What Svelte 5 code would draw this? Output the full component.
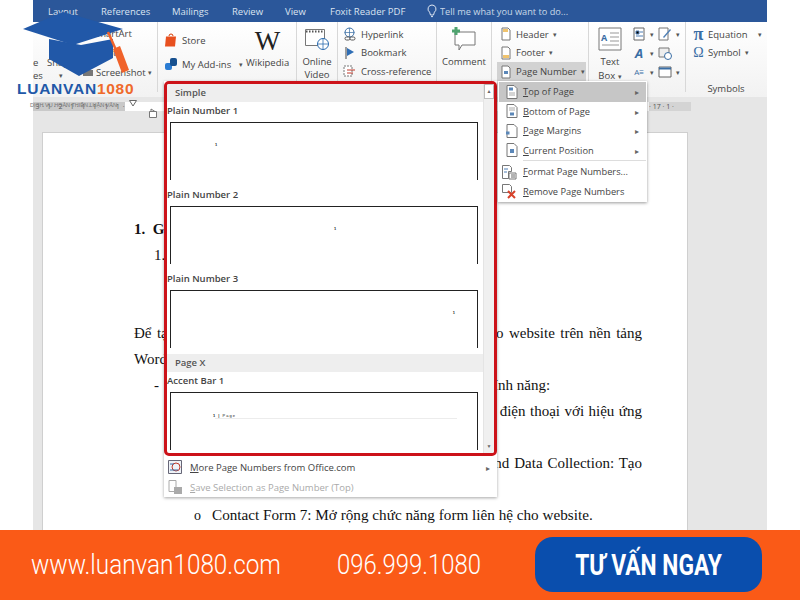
<script lang="ts">
	const tabs = [
		{label: 'Layout', width: 53},
		{label: 'References', width: 71},
		{label: 'Mailings', width: 60},
		{label: 'Review', width: 53},
		{label: 'View', width: 45},
		{label: 'Foxit Reader PDF', width: 96}
	];

	const docLines = [
		{text: 'Để tạo ra các chức năng cần thiết và thật hữu ích nhất cho website trên nền tảng', cls: 'just'},
		{text: 'WordPress, bạn có thể cài đặt thêm plugin:', cls: ''},
		{text: 'Elementor Page Builder: Trình dựng trang với nhiều tính năng:', cls: 'dash'},
		{text: 'Tạo giao diện đẹp, thân thiện trên máy tính và điện thoại với hiệu ứng', cls: 'just sub'},
		{text: '', cls: 'sub'},
		{text: 'WPForms Lite: Contact Form, Survey, Quiz and Data Collection: Tạo', cls: 'just sub'},
		{text: '', cls: 'sub'}
	];

	const gallery = [
		{head: 'Simple'},
		{label: 'Plain Number 1', align: 'flex-start', pad: 44},
		{label: 'Plain Number 2', align: 'center', pad: 22},
		{label: 'Plain Number 3', align: 'flex-end', pad: 22},
		{head: 'Page X'},
		{label: 'Accent Bar 1', accent: true}
	];

	const subItems = [
		{key: 'T', rest: 'op of Page', arrow: true, active: true, icon: 'top'},
		{key: 'B', rest: 'ottom of Page', arrow: true, icon: 'bottom'},
		{key: 'P', rest: 'age Margins', arrow: true, icon: 'margin'},
		{key: 'C', rest: 'urrent Position', arrow: true, icon: 'current'}
	];
</script>

{#snippet pageIcon(kind: string)}
	<svg class="mi" viewBox="0 0 16 16">
		<path d="M3 1.500h7l3 3v10H3z" fill="#fff" stroke="#777"/>
		{#if kind === 'top'}
			<rect x="5" y="3.500" width="4" height="3" fill="#5b87b8"/>
			<path d="M5 9h6M5 11h6" stroke="#aaa"/>
		{:else if kind === 'bottom'}
			<path d="M5 5h6M5 7h6" stroke="#aaa"/>
			<rect x="6" y="9.500" width="4" height="3" fill="#5b87b8"/>
		{:else if kind === 'margin'}
			<rect x="2" y="8.500" width="3.500" height="3" fill="#5b87b8"/>
		{:else}
			<rect x="6" y="7" width="4" height="4" fill="#5b87b8"/>
		{/if}
	</svg>
{/snippet}

<div class="screen">
	<div class="stage">
		<div class="word">
			<div class="tabs">
				{#each tabs as t}
					<span class="tab" style="width: {t.width}px">{t.label}</span>
				{/each}
				<svg class="bulb" viewBox="0 0 12 14"><path d="M6 1a4 4 0 0 0-2.400 7.200L4.500 11h3l.9-2.800A4 4 0 0 0 6 1zM5 12.600h2" fill="none" stroke="#dfe7f3"/></svg>
				<span class="tell">Tell me what you want to do...</span>
			</div>

			<div class="ribbon">
				<div class="group g-illus">
					<div class="clipped"><span>e</span><span>es</span></div>
					<div class="shapes"><span>Shapes</span><span class="caret">▾</span></div>
					<div class="stack">
						<span>SmartArt</span>
						<span>Chart</span>
						<span class="shot">
							<svg class="i12" viewBox="0 0 12 12"><path d="M1 4h3l1-1.500h2L8 4h3v6H1z" fill="#777"/></svg>
							Screenshot <i class="caret">▾</i>
						</span>
					</div>
				</div>

				<div class="group g-addins">
					<div class="addin-col">
						<span class="row">
							<svg class="i14" viewBox="0 0 14 14"><path d="M5 3a2 2 0 0 1 4 0" fill="none" stroke="#d83b01"/><path d="M2 3.500h10l-1 10H1z" fill="#e8501f"/></svg>
							Store
						</span>
						<span class="row">
							<svg class="i14" viewBox="0 0 14 14"><rect x="1" y="6" width="7" height="7" rx="2" fill="#2b7cd3"/><rect x="6" y="1" width="7" height="8" rx="2" fill="#17508f"/></svg>
							My Add-ins <i class="caret gap">▾</i>
						</span>
					</div>
					<div class="wiki"><span class="w">W</span><span>Wikipedia</span></div>
				</div>

				<div class="group g-video">
					<svg class="i24" viewBox="0 0 26 24">
						<path d="M1.500 2.500h19v16h-19z" fill="#fff" stroke="#777"/>
						<path d="M2 4.500h18" stroke="#555" stroke-dasharray="1.500 1.500" stroke-width="2"/>
						<circle cx="19" cy="17" r="5.500" fill="#fff" stroke="#2b6cb0"/>
						<path d="M13.500 17h11M19 11.500v11" stroke="#2b6cb0" stroke-width=".8"/>
					</svg>
					<span>Online</span><span>Video</span>
				</div>

				<div class="group g-links">
					<span class="row">
						<svg class="i14" viewBox="0 0 14 14"><circle cx="6.500" cy="5.500" r="4.500" fill="none" stroke="#3a6ea5"/><path d="M1.500 5.500h10M6.500 1v9" stroke="#3a6ea5" stroke-width=".7"/><rect x="2" y="10" width="5" height="3" rx="1.500" fill="#fff" stroke="#555"/><rect x="7" y="10" width="5" height="3" rx="1.500" fill="#fff" stroke="#555"/></svg>
						Hyperlink
					</span>
					<span class="row">
						<svg class="i14" viewBox="0 0 14 14"><path d="M3 1v12" stroke="#444"/><path d="M4 2l7 4-7 4z" fill="#2f6eb5"/></svg>
						Bookmark
					</span>
					<span class="row">
						<svg class="i14" viewBox="0 0 14 14"><path d="M1 2h8v10H1z" fill="#fff" stroke="#777" stroke-dasharray="2 1"/><path d="M4 6h8M4 9h6" stroke="#c0392b"/></svg>
						Cross-reference
					</span>
				</div>

				<div class="group g-comment">
					<svg class="i-comment" viewBox="0 0 26 24">
						<path d="M4 5h20v13H11l-3 5v-5H4z" fill="#fff" stroke="#777"/>
						<path d="M5 0v8M1 4h8" stroke="#4fa36f" stroke-width="3"/>
					</svg>
					<span>Comment</span>
				</div>

				<div class="group g-header">
					<span class="row pad">
						<svg class="i12" viewBox="0 0 12 14"><path d="M2 1h6l2 2v10H2z" fill="#fff" stroke="#777"/><rect x="3" y="2" width="5" height="3" fill="#f0c36d"/></svg>
						Header <i class="caret">▾</i>
					</span>
					<span class="row pad">
						<svg class="i12" viewBox="0 0 12 14"><path d="M2 1h6l2 2v10H2z" fill="#fff" stroke="#777"/><rect x="3" y="9" width="6" height="3" fill="#f0c36d"/></svg>
						Footer <i class="caret">▾</i>
					</span>
					<span class="row pad on">
						<svg class="i12" viewBox="0 0 12 14"><path d="M2 1h6l2 2v10H2z" fill="#fff" stroke="#777"/><rect x="4" y="6" width="4" height="3" fill="#5b87b8"/></svg>
						Page Number <i class="caret">▾</i>
					</span>
				</div>

				<div class="group g-text">
					<div class="textbox">
						<svg class="i-text" viewBox="0 0 24 24"><path d="M1 1h22v22H1z" fill="#fff" stroke="#777"/><text x="3" y="14" class="a">A</text><path d="M12 6h9M12 10h9M12 14h9M4 18h17" stroke="#999"/></svg>
						<span>Text</span><span>Box <i class="caret">▾</i></span>
					</div>
					<div class="tools">
						<svg class="i14" viewBox="0 0 14 14"><path d="M2 1h10v12H2z" fill="#fff" stroke="#666"/><path d="M4 4h3v3H4zM8 5h3M4 9h7" stroke="#4f7fb5"/></svg><i class="caret">▾</i>
						<svg class="i14" viewBox="0 0 14 14"><path d="M1 1h9v12H1z" fill="#fff" stroke="#777"/><path d="M5 10l7-8 1 1-7 8z" fill="#4f7fb5"/></svg><i class="caret">▾</i>
						<span class="wordart">A</span><i class="caret">▾</i>
						<svg class="i14" viewBox="0 0 14 14"><path d="M1 2h10v9H1z" fill="#eee" stroke="#777"/><circle cx="10" cy="10" r="3.500" fill="#fff" stroke="#3a6ea5"/></svg><i class="caret hide">▾</i>
						<span class="dropcap">A≡</span><i class="caret">▾</i>
						<svg class="i14" viewBox="0 0 14 14"><path d="M1 2h12v10H1z" fill="#fff" stroke="#666"/><path d="M1 3.500h12" stroke="#3a6ea5" stroke-width="2"/></svg><i class="caret">▾</i>
					</div>
				</div>

				<div class="group g-symbols">
					<span class="row"><b class="sym">π</b>Equation <i class="caret far">▾</i></span>
					<span class="row"><b class="sym omega">Ω</b>Symbol <i class="caret">▾</i></span>
					<span class="group-name">Symbols</span>
				</div>
			</div>

			<div class="workspace">
				<div class="ruler">
					<span class="ruler-dark">3 · 1 · 2 · 1 · 1 · 1 · 1 · 1 ·</span>
					<span class="ruler-white">
						<svg class="tri" viewBox="0 0 8 7"><path d="M0.500 .5h7L4 6z" fill="#fff" stroke="#666"/></svg>
						<svg class="tab-mark" viewBox="0 0 8 10"><path d="M.5 3.500h7v6h-7zM2 3.500V1l4 2.500" fill="#fff" stroke="#777"/></svg>
					</span>
					<span class="ruler-end">· 17 · 1 ·</span>
				</div>
				<div class="doc">
					<p class="h1"><b>1.&nbsp;&nbsp;Giới thiệu</b></p>
					<p class="h2">1.1. Tổng quan</p>
					<p>&nbsp;</p>
					<p>&nbsp;</p>
					{#each docLines as l}
						<p class={l.cls}>{l.text || '\u00a0'}</p>
					{/each}
					<p class="bullet"><span>o</span>Contact Form 7: Mở rộng chức năng form liên hệ cho website.</p>
				</div>
			</div>
		</div>

		<div class="menu">
			<div class="gallery">
				<div class="gallery-list">
					{#each gallery as g}
						{#if g.head}
							<div class="g-head">{g.head}</div>
						{:else}
							<div class="g-label">{g.label}</div>
							<div class="g-box" style={g.accent ? '' : `justify-content: ${g.align}; padding-left: ${g.align === 'flex-end' ? 0 : g.pad}px; padding-right: ${g.align === 'flex-end' ? g.pad : 0}px`}>
								{#if g.accent}
									<span class="accent"><b>1 |</b> Page</span>
									<span class="accent-line"></span>
								{:else}
									<span class="num">1</span>
								{/if}
							</div>
						{/if}
					{/each}
				</div>
				<div class="scrollbar">
					<span class="sb-btn up">▲</span>
					<span class="sb-track"></span>
					<span class="sb-btn down">▼</span>
				</div>
			</div>
			<div class="menu-foot">
				<div class="foot-item">
					<svg class="mi" viewBox="0 0 16 16"><path d="M1.500 1.500h13v13h-13z" fill="#eef2f7" stroke="#667"/><circle cx="9" cy="8" r="4" fill="none" stroke="#c0392b"/><path d="M3 5h4M3 11h8" stroke="#3a6ea5"/></svg>
					<span class="foot-text"><u>M</u>ore Page Numbers from Office.com</span>
					<i class="arr">▸</i>
				</div>
				<div class="foot-item off">
					<svg class="mi" viewBox="0 0 16 16"><path d="M2 1.500h7v11H2z" fill="#fff" stroke="#aaa"/><rect x="7" y="8" width="8" height="7" fill="#aaa"/></svg>
					<span class="foot-text"><u>S</u>ave Selection as Page Number (Top)</span>
				</div>
			</div>
		</div>

		<div class="submenu">
			{#each subItems as s}
				<div class="sub-item" class:active={s.active}>
					{@render pageIcon(s.icon)}
					<span class="sub-text"><u>{s.key}</u>{s.rest}</span>
					<i class="arr">▸</i>
				</div>
			{/each}
			<div class="sub-sep"></div>
			<div class="sub-item">
				<svg class="mi wide" viewBox="0 0 16 16"><path d="M1.500 1.500h7l2 2v4h-3v7h-6z" fill="#fff" stroke="#777"/><path d="M3 5h4M3 8h3" stroke="#4f7fb5"/><path d="M8 9h7v6H8z" fill="#fff" stroke="#777"/><path d="M10 11h4M10 13h4" stroke="#666"/></svg>
				<span class="sub-text"><u>F</u>ormat Page Numbers...</span>
			</div>
			<div class="sub-item">
				<svg class="mi wide" viewBox="0 0 16 16"><path d="M1.500 1.500h7l2 2v6h-9z" fill="#fff" stroke="#777"/><path d="M7 8l7 7M14 8l-7 7" stroke="#d8432b" stroke-width="2"/></svg>
				<span class="sub-text"><u>R</u>emove Page Numbers</span>
			</div>
		</div>

		<div class="logo">
			<svg class="hat" viewBox="0 0 120 64" width="120" height="64">
				<path d="M26 27v20l30 17 34-18V27L58 33z" fill="#2158a8"/>
				<path d="M0 17L40 0l60 17-50 16z" fill="#2158a8"/>
				<path d="M85 20l8 18" stroke="#f0622a" stroke-width="2.500"/>
				<path d="M90 37l7-3 9 24-7 3z" fill="#f0622a"/>
			</svg>
			<div class="logo-name">LUANVAN<span>1080</span></div>
			<div class="logo-sub">DỊCH VỤ HOÀN THIỆN LUẬN VĂN</div>
		</div>
	</div>

	<footer class="footer">
		<span class="foot-url"><span>www.luanvan1080.com</span></span>
		<span class="foot-phone"><span>096.999.1080</span></span>
		<button class="cta"><span>TƯ VẤN NGAY</span></button>
	</footer>
</div>

<style>
	:global(body) {
		margin: 0;
		background: #fff;
	}

	.screen {
		width: 800px;
		height: 600px;
		display: flex;
		flex-direction: column;
		overflow: hidden;
		font-family: "Open Sans", "Noto Sans", sans-serif;
	}

	.stage {
		position: relative;
		height: 530px;
		padding: 0 33px;
		overflow: hidden;
	}

	.word {
		height: 530px;
		display: flex;
		flex-direction: column;
		background: #e6e6e6;
	}

	i { font-style: normal; }

	/* title tabs */
	.tabs {
		height: 22px;
		flex: none;
		display: flex;
		align-items: center;
		padding-left: 15px;
		background: #2b579a;
		color: #dbe4f1;
		font-size: 9.5px;
	}
	.tab { flex: none; white-space: nowrap; }
	.bulb { width: 12px; height: 14px; margin-right: 2px; }
	.tell { opacity: .9; font-size: 9.2px; }

	/* ribbon */
	.ribbon {
		height: 75px;
		flex: none;
		display: flex;
		background: linear-gradient(#fff, #f2f2f2);
		color: #444;
		font-size: 9.5px;
	}
	.group {
		flex: none;
		position: relative;
		border-right: 1px solid #d8d8d8;
		box-sizing: border-box;
		margin-bottom: 5px;
		padding-top: 5px;
	}
	.row {
		display: flex;
		align-items: center;
		gap: 4px;
		height: 18.500px;
		white-space: nowrap;
	}
	.caret { font-size: 7px; color: #555; }
	.caret.hide { visibility: hidden; }
	.caret.far { margin-left: 6px; }
	.caret.gap { margin-left: 4px; }
	.i12 { width: 12px; height: 14px; flex: none; }
	.i14 { width: 14px; height: 14px; flex: none; }
	.i24 { width: 26px; height: 24px; flex: none; }

	.g-illus { width: 125px; display: flex; padding-top: 5px; }
	.clipped {
		width: 10px;
		display: flex;
		flex-direction: column;
		padding-top: 29px;
		line-height: 13px;
		white-space: nowrap;
	}
	.shapes {
		width: 47px;
		margin-left: 2px;
		display: flex;
		flex-direction: column;
		align-items: flex-start;
		padding-top: 29px;
		padding-left: 2px;
		box-sizing: border-box;
		line-height: 13px;
	}
	.shapes .caret { margin-left: 12px; }
	.stack {
		display: flex;
		flex-direction: column;
		gap: 6px;
		line-height: 13px;
	}
	.shot { display: flex; align-items: center; gap: 2px; margin-left: -10px; }

	.g-addins { width: 139px; display: flex; padding-left: 6px; }
	.addin-col { width: 82px; flex: none; display: flex; flex-direction: column; gap: 5.500px; padding-top: 4px; }
	.wiki {
		display: flex;
		flex-direction: column;
		align-items: center;
		line-height: 13px;
	}
	.wiki .w {
		font: 27px/28px "Liberation Serif", serif;
		color: #222;
		margin-bottom: 1px;
	}

	.g-video {
		width: 41px;
		display: flex;
		flex-direction: column;
		align-items: center;
		line-height: 13px;
	}
	.g-video svg { margin-bottom: 4px; }
	.g-links { width: 99px; padding-left: 5px; padding-top: 3px; }
	.g-comment {
		width: 55px;
		display: flex;
		flex-direction: column;
		align-items: center;
	}
	.i-comment { width: 26px; height: 24px; margin-bottom: 4px; }
	.g-header { width: 97px; padding-left: 5px; padding-top: 3px; }
	.row.pad { padding-left: 3px; }
	.row.on { background: #d2d2d2; width: 86px; height: 19px; }

	.g-text { width: 97px; display: flex; }
	.textbox {
		width: 42px;
		flex: none;
		display: flex;
		flex-direction: column;
		align-items: center;
		line-height: 14px;
		padding-top: 0;
	}
	.i-text { width: 24px; height: 24px; margin-bottom: 4px; }
	.a { font: bold 9px "Open Sans", sans-serif; fill: #3a6ea5; }
	.tools {
		display: grid;
		grid-template-columns: 14px 10px 14px 10px;
		row-gap: 5px;
		column-gap: 1px;
		align-items: center;
		align-content: start;
		justify-items: center;
		padding-left: 1px;
	}
	.wordart {
		color: #3a6ea5;
		font-weight: bold;
		font-style: italic;
		font-size: 13px;
		line-height: 14px;
	}
	.dropcap { color: #3a6ea5; font-size: 8px; line-height: 14px; }

	.g-symbols { flex: 1; padding-left: 7px; padding-top: 3px; border-right: 0; }
	.sym {
		color: #3a6ea5;
		font: bold 18px/16px "Liberation Serif", serif;
		width: 11px;
		text-align: center;
	}
	.sym.omega { font: 14px/16px "Liberation Serif", serif; }
	.group-name {
		display: block;
		margin-top: 20px;
		text-align: center;
		padding-right: 8px;
		font-size: 9.5px;
	}

	/* document */
	.workspace { flex: 1; min-height: 0; overflow: hidden; }
	.ruler {
		display: flex;
		height: 9px;
		margin-top: 5px;
		font-size: 7px;
		color: #555;
	}
	.ruler-dark {
		width: 92px;
		background: #c9c9c9;
		line-height: 9px;
		overflow: hidden;
		white-space: nowrap;
		text-align: right;
		letter-spacing: .5px;
	}
	.ruler-white { width: 520px; background: #fff; padding-left: 4px; display: flex; gap: 12px; }
	.tri { display: block; width: 8px; height: 7px; margin-top: -2px; }
	.tab-mark { display: block; width: 8px; height: 10px; margin-top: 6px; overflow: visible; }
	.ruler-end { width: 42px; background: #d4d4d4; line-height: 9px; white-space: nowrap; }

	.doc {
		width: 646px;
		box-sizing: border-box;
		height: 420px;
		margin: 21px 0 0 9px;
		padding: 83px 45px 0 91px;
		background: #fff;
		border: 1px solid #cfcfcf;
		border-width: 1px 1px 0;
		font: 15px/26px "Liberation Serif", serif;
		color: #111;
	}
	.doc p { margin: 0; white-space: nowrap; }
	.doc .h2 { padding-left: 20px; }
	.doc .just { white-space: normal; text-align: justify; text-align-last: justify; }
	.doc .dash { padding-left: 38px; position: relative; }
	.doc .dash::before { content: '-'; position: absolute; left: 20px; }
	.doc .sub { padding-left: 78px; }
	.doc .bullet { padding-left: 60px; font-size: 15.200px; }
	.bullet span { margin-right: 11px; font-size: 14px; }

	/* page number menu */
	.menu {
		position: absolute;
		left: 164px;
		top: 81px;
		width: 333px;
		background: #fff;
		box-shadow: 0 1px 3px rgba(0, 0, 0, .35);
		font-size: 9.5px;
		color: #444;
	}
	.gallery {
		height: 375px;
		box-sizing: border-box;
		display: flex;
		border: 3px solid #cc1219;
		border-radius: 5px;
		background: #fff;
		overflow: hidden;
	}
	.gallery-list { width: 316px; flex: none; overflow: hidden; }
	.g-head {
		height: 18px;
		line-height: 18px;
		padding-left: 8px;
		background: #eeeeee;
		font-weight: 600;
		color: #555;
	}
	.g-label {
		height: 21px;
		line-height: 17px;
		font-weight: 600;
		color: #444;
	}
	.g-box {
		box-sizing: border-box;
		width: 308px;
		height: 58px;
		margin-left: 3px;
		margin-bottom: 6px;
		padding-top: 19px;
		display: flex;
		position: relative;
		border: 1px solid #222;
		border-bottom: 0;
		font-family: "Liberation Sans", sans-serif;
		color: #222;
	}
	.g-box:last-child { margin-bottom: 0; }
	.g-label + .g-box { margin-top: -1px; }
	.num { font-size: 4px; line-height: 6px; font-weight: bold; }
	.accent {
		font-size: 4px;
		letter-spacing: 1px;
		line-height: 6px;
		margin-left: 42px;
		margin-top: 1px;
		white-space: nowrap;
	}
	.accent-line {
		position: absolute;
		left: 44px;
		right: 20px;
		top: 25px;
		height: 1px;
		background: #ececec;
	}
	.scrollbar {
		flex: 1;
		display: flex;
		flex-direction: column;
		background: #f0f0f0;
		border-left: 1px solid #e4e4e4;
		font-size: 5px;
		color: #666;
	}
	.sb-btn {
		height: 13px;
		line-height: 13px;
		text-align: center;
	}
	.sb-btn.up { background: #fff; border: 1px solid #bbb; }
	.sb-track { flex: 1; }

	.menu-foot { height: 41px; padding-top: 1px; box-sizing: border-box; }
	.foot-item {
		height: 20px;
		display: flex;
		align-items: center;
		padding-left: 3px;
	}
	.foot-text { margin-left: 7px; flex: 1; font-size: 9.5px; }
	.foot-item .arr { margin-right: 7px; }
	.foot-item.off { color: #aaa; }
	.arr { font-size: 8px; color: #666; }
	.mi { width: 16px; height: 16px; flex: none; }

	.submenu {
		position: absolute;
		left: 498px;
		top: 81px;
		width: 149px;
		height: 121px;
		box-sizing: border-box;
		padding: 1px;
		background: #fff;
		box-shadow: 0 1px 3px rgba(0, 0, 0, .4);
		font-size: 9.3px;
		color: #444;
	}
	.sub-item {
		height: 19.500px;
		display: flex;
		align-items: center;
		padding-left: 5px;
	}
	.sub-item.active { background: #c6c6c6; }
	.sub-text { margin-left: 3px; flex: 1; white-space: nowrap; }
	.sub-item .arr { margin-right: 7px; }
	.mi.wide { margin-left: -3px; margin-right: 3px; }
	.sub-sep { height: 1px; margin: 0 0 1px 24px; background: #ddd; }

	/* logo overlay */
	.logo {
		position: absolute;
		left: 17px;
		top: 12px;
		width: 125px;
		display: flex;
		flex-direction: column;
		color: #2158a8;
	}
	.hat { margin-left: 6px; display: block; }
	.logo-name {
		margin-top: 5px;
		font: bold 15.500px/16px "Liberation Sans", sans-serif;
		letter-spacing: .75px;
		white-space: nowrap;
	}
	.logo-name span { color: #ef6a2a; }
	.logo-sub {
		margin: 4px 0 0 13px;
		font: 5.500px/9px "Liberation Sans", sans-serif;
		color: #777;
		white-space: nowrap;
	}

	/* footer */
	.footer {
		height: 70px;
		flex: none;
		display: flex;
		align-items: center;
		padding: 0 38px 0 31px;
		background: #fa5a17;
		color: #fff;
		font-family: Roboto, sans-serif;
		font-weight: 300;
		font-size: 27px;
	}
	.foot-url { width: 306px; flex: none; white-space: nowrap; }
	.foot-url span { display: inline-block; transform: scaleX(.9); transform-origin: left; }
	.foot-phone { width: 198px; flex: none; white-space: nowrap; }
	.foot-phone span { display: inline-block; transform: scaleX(.885); transform-origin: left; }
	.cta {
		width: 227px;
		height: 55px;
		flex: none;
		margin-bottom: 1px;
		border: 0;
		border-radius: 18px;
		background: #0a4ead;
		color: #fff;
		font: bold 30px Roboto, sans-serif;
		white-space: nowrap;
	}
	.cta span { display: inline-block; transform: scaleX(.76); }
</style>
